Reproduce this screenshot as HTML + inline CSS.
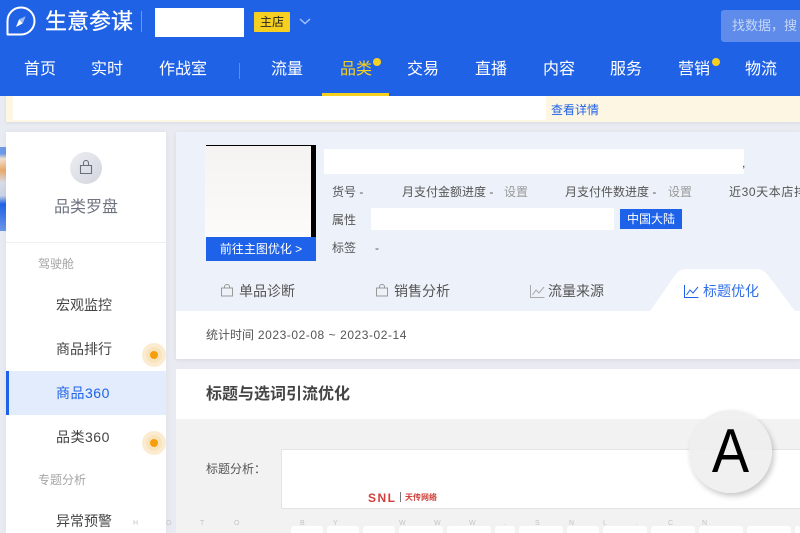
<!DOCTYPE html>
<html lang="zh">
<head>
<meta charset="utf-8">
<title>生意参谋</title>
<style>
html,body{margin:0;padding:0;width:800px;height:533px;overflow:hidden;background:#e8ebf1;}
body{position:relative;font-family:"Liberation Sans","Noto Sans CJK SC",sans-serif;color:#333;}
.a{position:absolute;display:block;box-sizing:border-box;}
.t{position:absolute;white-space:nowrap;line-height:20px;height:20px;}
.n{font-size:16px;color:#fff;top:60px;}
.m{font-size:14px;color:#444;left:56px;}
.i{font-size:12px;color:#555;}
.g{font-size:12px;color:#999;}
.s{letter-spacing:.6px;}
.k{position:absolute;top:519px;font-size:7px;line-height:10px;color:#c4c4c4;}
.b{position:absolute;top:526px;height:12px;background:#fff;border-radius:3px 3px 0 0;}
.dot{position:absolute;width:8px;height:8px;border-radius:50%;background:#f5d020;}
</style>
</head>
<body>
<!-- page cards -->
<div class="a" style="left:6px;top:96px;width:794px;height:26px;background:#fdf6e3;box-shadow:0 1px 3px rgba(0,0,0,.08)"></div>
<div class="a" style="left:13px;top:96px;width:533px;height:24px;background:#fff"></div>
<a class="t" style="left:551px;top:100px;font-size:12px;color:#2062e6">查看详情</a>

<!-- header -->
<div class="a" style="left:0;top:0;width:800px;height:96px;background:#2062e6"></div>
<svg class="a" style="left:6px;top:6px" width="30" height="30" viewBox="0 0 30 30">
<path d="M1.500 28.500V15A13.500 13.500 0 1 1 15 28.500Z" fill="none" stroke="#fff" stroke-width="2" stroke-linejoin="round"/>
<path d="M19.500 10.500L16.500 17.500 10 21 13 13.500Z" fill="#fff"/>
<path d="M19.500 10.500L13 13.500 16.500 17.500Z" fill="#9dbcf5"/>
</svg>
<span class="t" style="left:45px;top:8px;height:28px;line-height:28px;font-size:22px;color:#fff;-webkit-text-stroke:.3px #fff">生意参谋</span>
<div class="a" style="left:141px;top:11px;width:1px;height:21px;background:#6d97ee"></div>
<div class="a" style="left:155px;top:8px;width:89px;height:29px;background:#fff"></div>
<div class="a" style="left:254px;top:12px;width:36px;height:20px;background:#f5d020;border-radius:1px"></div>
<span class="t" style="left:254px;top:12px;width:36px;text-align:center;font-size:12px;color:#222">主店</span>
<svg class="a" style="left:298px;top:17px" width="14" height="9" viewBox="0 0 14 9"><path d="M2 2L7 6.500 12 2" fill="none" stroke="#a9c2f4" stroke-width="1.500"/></svg>
<div class="a" style="left:721px;top:10px;width:79px;height:32px;background:#5f8ceb;border-radius:3px 0 0 3px"></div>
<span class="t" style="left:732px;top:16px;font-size:13px;color:#c5d6f7">找数据，搜</span>

<span class="t n" style="left:24px">首页</span>
<span class="t n" style="left:91px">实时</span>
<span class="t n" style="left:159px">作战室</span>
<div class="a" style="left:239px;top:63px;width:1px;height:16px;background:#5d8dec"></div>
<span class="t n" style="left:271px">流量</span>
<span class="t n" style="left:340px;color:#f5d020">品类</span>
<div class="dot" style="left:373px;top:58px"></div>
<span class="t n" style="left:407px">交易</span>
<span class="t n" style="left:475px">直播</span>
<span class="t n" style="left:543px">内容</span>
<span class="t n" style="left:610px">服务</span>
<span class="t n" style="left:678px">营销</span>
<div class="dot" style="left:712px;top:58px"></div>
<span class="t n" style="left:745px">物流</span>
<div class="a" style="left:322px;top:93px;width:67px;height:3px;background:#f5d020"></div>

<!-- left edge promo -->
<div class="a" style="left:0;top:147px;width:6px;height:84px;background:linear-gradient(180deg,#6c9ae8 0,#6c9ae8 8%,#f3e2cf 14%,#e8a868 28%,#d8dde6 42%,#c9d3e6 58%,#2062e6 68%,#6c96ea 100%)"></div>

<!-- sidebar -->
<div class="a" style="left:6px;top:132px;width:160px;height:401px;background:#fff;box-shadow:0 0 6px rgba(0,0,0,.05)"></div>
<div class="a" style="left:70px;top:152px;width:32px;height:32px;border-radius:50%;background:linear-gradient(135deg,#eceef2,#d2d5dd)"></div>
<svg class="a" style="left:79px;top:160px" width="14" height="15" viewBox="0 0 14 15"><path d="M1.500 5.500H12.500V13.500H1.500ZM4.500 5.500V3A2.500 2.500 0 0 1 9.500 3V5.500" fill="none" stroke="#6a6f7c" stroke-width="1.100"/></svg>
<span class="t" style="left:54px;top:198px;font-size:16px;color:#6f7480">品类罗盘</span>
<div class="a" style="left:6px;top:242px;width:160px;height:1px;background:#eeeff2"></div>
<span class="t g" style="left:38px;top:254px;color:#a5a5a5">驾驶舱</span>
<span class="t m" style="top:295px">宏观监控</span>
<span class="t m" style="top:339px">商品排行</span>
<div class="a" style="left:6px;top:371px;width:160px;height:44px;background:#e2ecfc"></div>
<div class="a" style="left:6px;top:371px;width:3px;height:44px;background:#1f62ea"></div>
<span class="t m" style="top:383px;color:#2062e6;letter-spacing:.5px">商品360</span>
<span class="t m" style="top:427px;letter-spacing:.5px">品类360</span>
<span class="t g" style="left:38px;top:470px;color:#a5a5a5">专题分析</span>
<span class="t m" style="top:511px">异常预警</span>
<div class="a" style="left:142px;top:343px;width:24px;height:24px;border-radius:50%;background:#fbebd0"></div>
<div class="a" style="left:146px;top:347px;width:16px;height:16px;border-radius:50%;background:#f9e3bd"></div>
<div class="a" style="left:150px;top:351px;width:8px;height:8px;border-radius:50%;background:#f59f0a"></div>
<div class="a" style="left:142px;top:431px;width:24px;height:24px;border-radius:50%;background:#fbebd0"></div>
<div class="a" style="left:146px;top:435px;width:16px;height:16px;border-radius:50%;background:#f9e3bd"></div>
<div class="a" style="left:150px;top:439px;width:8px;height:8px;border-radius:50%;background:#f59f0a"></div>

<!-- product card -->
<div class="a" style="left:176px;top:132px;width:624px;height:227px;background:#fff;box-shadow:0 1px 4px rgba(0,0,0,.08)"></div>
<div class="a" style="left:176px;top:132px;width:624px;height:179px;background:#edf1f9"></div>
<div class="a" style="left:206px;top:145px;width:110px;height:116px;background:#000"></div>
<div class="a" style="left:205px;top:146px;width:106px;height:92px;background:linear-gradient(180deg,#f5f3f2,#fdfbfa)"></div>
<div class="a" style="left:206px;top:237px;width:110px;height:24px;background:#1f62ea"></div>
<span class="t" style="left:206px;top:239px;width:110px;text-align:center;font-size:12px;color:#fff">前往主图优化 &gt;</span>
<div class="a" style="left:324px;top:149px;width:420px;height:25px;background:#fff"></div>
<span class="t" style="left:742px;top:153px;font-size:12px;color:#444">,</span>
<span class="t i" style="left:332px;top:182px">货号 -</span>
<span class="t i" style="left:402px;top:182px">月支付金额进度 -</span>
<span class="t g" style="left:504px;top:182px">设置</span>
<span class="t i" style="left:565px;top:182px">月支付件数进度 -</span>
<span class="t g" style="left:668px;top:182px">设置</span>
<span class="t i s" style="left:729px;top:182px">近30天本店排名</span>
<span class="t i" style="left:332px;top:210px">属性</span>
<div class="a" style="left:371px;top:208px;width:243px;height:22px;background:#fff"></div>
<div class="a" style="left:620px;top:209px;width:62px;height:20px;background:#1f62ea"></div>
<span class="t" style="left:620px;top:209px;width:62px;text-align:center;font-size:12px;color:#fff">中国大陆</span>
<span class="t i" style="left:332px;top:238px">标签</span>
<span class="t i" style="left:375px;top:238px">-</span>

<!-- tabs -->
<svg class="a" style="left:221px;top:284px" width="12" height="13" viewBox="0 0 12 13"><path d="M.500 4H11.500V12H.500ZM3.500 4V2.500A2.500 2 0 0 1 8.500 2.500V4" fill="none" stroke="#999" stroke-width="1"/></svg>
<span class="t" style="left:239px;top:281px;font-size:14px;color:#555">单品诊断</span>
<svg class="a" style="left:376px;top:284px" width="12" height="13" viewBox="0 0 12 13"><path d="M.500 4H11.500V12H.500ZM3.500 4V2.500A2.500 2 0 0 1 8.500 2.500V4" fill="none" stroke="#999" stroke-width="1"/></svg>
<span class="t" style="left:394px;top:281px;font-size:14px;color:#555">销售分析</span>
<svg class="a" style="left:530px;top:285px" width="15" height="13" viewBox="0 0 15 13"><path d="M.500 0V12.500H14.500M2.500 10L6 5 9 8 14 2" fill="none" stroke="#aaa" stroke-width="1"/></svg>
<span class="t" style="left:548px;top:281px;font-size:14px;color:#555">流量来源</span>
<svg class="a" style="left:650px;top:268px" width="150" height="43" viewBox="0 0 150 43"><path d="M0 43L26 6Q30 1 37 1H106Q113 1 117 6L145 43Z" fill="#fff"/></svg>
<svg class="a" style="left:684px;top:285px" width="15" height="13" viewBox="0 0 15 13"><path d="M.500 0V12.500H14.500M2.500 10L6 5 9 8 14 2" fill="none" stroke="#2062e6" stroke-width="1"/></svg>
<span class="t" style="left:703px;top:281px;font-size:14px;color:#2f6fe8">标题优化</span>
<span class="t" style="left:206px;top:325px;font-size:12px;color:#555;letter-spacing:.55px"><span style="letter-spacing:0">统计时间</span> 2023-02-08 ~ 2023-02-14</span>

<!-- title card -->
<div class="a" style="left:176px;top:369px;width:624px;height:164px;background:#f2f2f2"></div>
<div class="a" style="left:176px;top:369px;width:624px;height:50px;background:#fff"></div>
<span class="t" style="left:206px;top:385px;font-size:16px;font-weight:bold;color:#444">标题与选词引流优化</span>
<span class="t i" style="left:206px;top:459px">标题分析：</span>
<div class="a" style="left:281px;top:449px;width:519px;height:60px;background:#fff;border:1px solid #e4e4e4;border-right:0"></div>
<span class="t" style="left:368px;top:488px;font-size:12px;font-weight:bold;color:#d0403c;letter-spacing:1.500px">SNL</span>
<div class="a" style="left:400px;top:492px;width:1px;height:10px;background:#777"></div>
<span class="t" style="left:405px;top:488px;font-size:8px;font-weight:bold;color:#d0403c">天传网络</span>

<!-- letter row -->
<span class="k" style="left:133px">H</span><span class="k" style="left:166px">O</span><span class="k" style="left:200px">T</span><span class="k" style="left:234px">O</span><span class="k" style="left:300px">B</span><span class="k" style="left:333px">Y</span><span class="k" style="left:399px">W</span><span class="k" style="left:434px">W</span><span class="k" style="left:469px">W</span><span class="k" style="left:504px">.</span><span class="k" style="left:535px">S</span><span class="k" style="left:569px">N</span><span class="k" style="left:603px">L</span><span class="k" style="left:636px">.</span><span class="k" style="left:668px">C</span><span class="k" style="left:702px">N</span>
<div class="b" style="left:291px;width:32px"></div><div class="b" style="left:327px;width:32px"></div><div class="b" style="left:363px;width:32px"></div><div class="b" style="left:399px;width:44px"></div><div class="b" style="left:447px;width:44px"></div><div class="b" style="left:495px;width:20px"></div><div class="b" style="left:519px;width:44px"></div><div class="b" style="left:567px;width:32px"></div><div class="b" style="left:603px;width:44px"></div><div class="b" style="left:651px;width:44px"></div><div class="b" style="left:699px;width:44px"></div><div class="b" style="left:747px;width:44px"></div><div class="b" style="left:795px;width:5px"></div>

<!-- floating A -->
<div class="a" style="left:689px;top:410px;width:83px;height:83px;border-radius:50%;background:rgba(238,238,238,.88);box-shadow:2px 3px 6px rgba(0,0,0,.22)"></div>
<span class="t" style="left:689px;top:420px;width:83px;height:64px;line-height:64px;text-align:center;font-size:62px;color:#000;transform:scaleX(.9)">A</span>
</body>
</html>
